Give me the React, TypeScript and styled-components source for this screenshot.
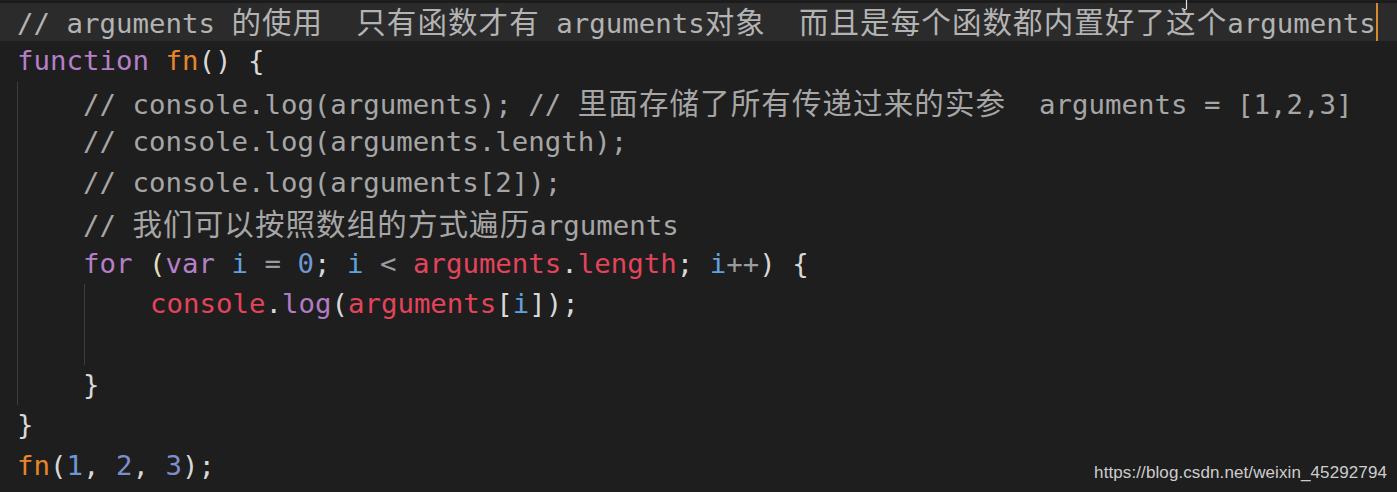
import React from "react";
import styled, { createGlobalStyle } from "styled-components";

const CW = 16.5;
const LH = 40.45;

const Global = createGlobalStyle`
  html, body { margin: 0; padding: 0; background: #1e1e1e; }
  #root { width: 1397px; height: 492px; }
`;

const Editor = styled.div`
  position: relative;
  width: 1397px;
  height: 492px;
  overflow: hidden;
  background: #1e1e1e;
  padding: 1px 0 0 17px;
  box-sizing: border-box;
  font-family: "DejaVu Sans Mono", "Liberation Mono", monospace;
  font-size: 27.4px;
  color: #d4d4d4;
`;

const Line = styled.div<{ $indent?: number; $active?: boolean }>`
  height: ${LH}px;
  line-height: ${LH}px;
  white-space: pre;
  padding-left: ${(p) => (p.$indent ?? 0) * CW}px;
  ${(p) =>
    p.$active
      ? `
    margin-left: -17px;
    padding-left: 17px;
    background: #2b2b2b;
    box-shadow: inset 0 2px 0 #1b1b1b;
  `
      : ""}
`;

const Block = styled.div<{ $col: number }>`
  margin-left: ${(p) => p.$col * CW}px;
  border-left: 1px solid #3d3d3d;
  & > ${Line} {
    margin-left: -1px;
  }
`;

const colors: Record<string, string> = {
  com: "#a6a6a6",
  comHi: "#b3b3b3",
  kw: "#b57fc7",
  fn: "#e8862a",
  p: "#d8d8d8",
  cream: "#e3dcbd",
  v: "#5fa2df",
  n: "#6d98d6",
  n2: "#7d8fca",
  op: "#9b9b9b",
  r: "#e3445b",
  m: "#b07cc6",
};

const Tok = styled.span<{ $k: string }>`
  color: ${(p) => colors[p.$k]};
`;

const Cjk = styled.span`
  font-family: "Noto Sans CJK SC", "Noto Sans CJK TC", sans-serif;
  font-size: 29.5px;
  line-height: 1.3;
  letter-spacing: 1.1px;
`;

const Caret = styled.span`
  display: inline-block;
  width: 2px;
  height: 38px;
  background: #d9892d;
  vertical-align: top;
  margin-top: 2px;
`;

const Watermark = styled.div`
  position: absolute;
  right: 10px;
  bottom: 9px;
  font-family: "Liberation Sans", Arial, sans-serif;
  font-size: 17px;
  color: #cdcdcd;
  letter-spacing: 0.1px;
`;

const Pointer = styled.svg`
  position: absolute;
  left: 1181px;
  top: 0;
`;

type Seg = [string, string] | [string, string, "cjk"];

const L = ({ segs }: { segs: Seg[] }) => (
  <>
    {segs.map((s, i) =>
      s[2] === "cjk" ? (
        <Tok key={i} $k={s[0]}>
          <Cjk>{s[1]}</Cjk>
        </Tok>
      ) : (
        <Tok key={i} $k={s[0]}>
          {s[1]}
        </Tok>
      )
    )}
  </>
);

export default function App() {
  return (
    <Editor>
      <Global />
      <Line $active>
        <L
          segs={[
            ["comHi", "// arguments "],
            ["comHi", "的使用", "cjk"],
            ["comHi", "  "],
            ["comHi", "只有函数才有", "cjk"],
            ["comHi", " arguments"],
            ["comHi", "对象", "cjk"],
            ["comHi", "  "],
            ["comHi", "而且是每个函数都内置好了这个", "cjk"],
            ["comHi", "arguments"],
          ]}
        />
        <Caret />
      </Line>
      <Line>
        <L
          segs={[
            ["kw", "function "],
            ["fn", "fn"],
            ["p", "() {"],
          ]}
        />
      </Line>
      <Block $col={0}>
        <Line $indent={4}>
          <L
            segs={[
              ["com", "// console.log(arguments); // "],
              ["com", "里面存储了所有传递过来的实参", "cjk"],
              ["com", "  arguments = [1,2,3]"],
            ]}
          />
        </Line>
        <Line $indent={4}>
          <L segs={[["com", "// console.log(arguments.length);"]]} />
        </Line>
        <Line $indent={4}>
          <L segs={[["com", "// console.log(arguments[2]);"]]} />
        </Line>
        <Line $indent={4}>
          <L
            segs={[
              ["com", "// "],
              ["com", "我们可以按照数组的方式遍历", "cjk"],
              ["com", "arguments"],
            ]}
          />
        </Line>
        <Line $indent={4}>
          <L
            segs={[
              ["kw", "for"],
              ["p", " "],
              ["cream", "("],
              ["kw", "var"],
              ["p", " "],
              ["v", "i"],
              ["op", " = "],
              ["n", "0"],
              ["p", "; "],
              ["v", "i"],
              ["op", " < "],
              ["r", "arguments"],
              ["p", "."],
              ["r", "length"],
              ["p", "; "],
              ["v", "i"],
              ["op", "++"],
              ["p", ") {"],
            ]}
          />
        </Line>
        <Block $col={4}>
          <Line $indent={4}>
            <L
              segs={[
                ["r", "console"],
                ["p", "."],
                ["m", "log"],
                ["p", "("],
                ["r", "arguments"],
                ["p", "["],
                ["v", "i"],
                ["p", "]);"],
              ]}
            />
          </Line>
          <Line $indent={4} />
        </Block>
        <Line $indent={4}>
          <L segs={[["p", "}"]]} />
        </Line>
      </Block>
      <Line>
        <L segs={[["p", "}"]]} />
      </Line>
      <Line>
        <L
          segs={[
            ["fn", "fn"],
            ["p", "("],
            ["n", "1"],
            ["p", ", "],
            ["n2", "2"],
            ["p", ", "],
            ["n2", "3"],
            ["p", ");"],
          ]}
        />
      </Line>
      <Pointer width="12" height="12" viewBox="0 0 12 12">
        <path d="M5.5 0 V9 M3 9.5 H5.5" stroke="#e0e0e0" strokeWidth="1.2" fill="none" />
      </Pointer>
      <Watermark>https://blog.csdn.net/weixin_45292794</Watermark>
    </Editor>
  );
}
